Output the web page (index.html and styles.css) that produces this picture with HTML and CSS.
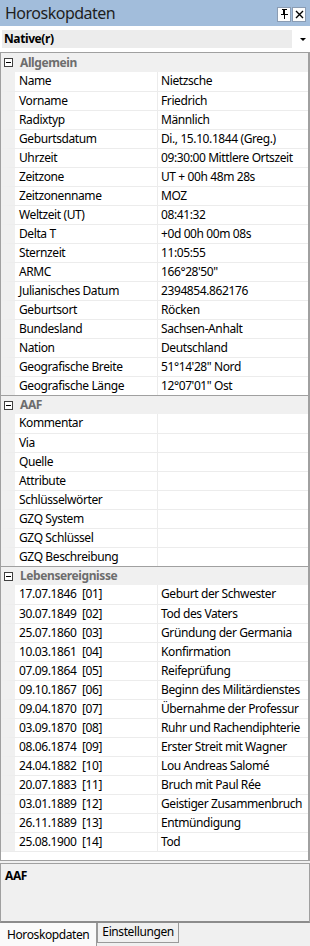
FILE: index.html
```html
<!DOCTYPE html>
<html lang="de">
<head>
    <meta charset="UTF-8">
    <title>Horoskopdaten</title>
    <link rel="stylesheet" href="styles.css">
</head>
<body>
    <div class="panel">
        <div class="titlebar">
            <span class="title">Horoskopdaten</span>
            <div class="title-buttons">
                <span class="tbtn">
                    <svg width="9" height="10" viewBox="0 0 9 10"><path d="M2 0h5v1h-1v4h2v1h-3v4h-1v-4h-3v-1h2v-4h-1z" fill="#000"/><path d="M5 1h1v4h-1z" fill="#fff"/></svg>
                </span>
                <span class="tbtn">
                    <svg width="9" height="9" viewBox="0 0 9 9"><path d="M1 1l7 7M8 1l-7 7" stroke="#000" stroke-width="1.4"/></svg>
                </span>
            </div>
        </div>

        <div class="combo-row">
            <div class="combo">Native(r)</div>
            <span class="combo-arrow"></span>
        </div>

        <div class="grid">
            <div class="cat"><span class="toggle"></span>Allgemein</div>
            <div class="row"><span class="key">Name</span><span class="val">Nietzsche</span></div>
            <div class="row"><span class="key">Vorname</span><span class="val">Friedrich</span></div>
            <div class="row"><span class="key">Radixtyp</span><span class="val">Männlich</span></div>
            <div class="row"><span class="key">Geburtsdatum</span><span class="val">Di., 15.10.1844 (Greg.)</span></div>
            <div class="row"><span class="key">Uhrzeit</span><span class="val">09:30:00 Mittlere Ortszeit</span></div>
            <div class="row"><span class="key">Zeitzone</span><span class="val">UT + 00h 48m 28s</span></div>
            <div class="row"><span class="key">Zeitzonenname</span><span class="val">MOZ</span></div>
            <div class="row"><span class="key">Weltzeit (UT)</span><span class="val">08:41:32</span></div>
            <div class="row"><span class="key">Delta T</span><span class="val">+0d 00h 00m 08s</span></div>
            <div class="row"><span class="key">Sternzeit</span><span class="val">11:05:55</span></div>
            <div class="row"><span class="key">ARMC</span><span class="val">166°28'50"</span></div>
            <div class="row"><span class="key">Julianisches Datum</span><span class="val">2394854.862176</span></div>
            <div class="row"><span class="key">Geburtsort</span><span class="val">Röcken</span></div>
            <div class="row"><span class="key">Bundesland</span><span class="val">Sachsen-Anhalt</span></div>
            <div class="row"><span class="key">Nation</span><span class="val">Deutschland</span></div>
            <div class="row"><span class="key">Geografische Breite</span><span class="val">51°14'28" Nord</span></div>
            <div class="row"><span class="key">Geografische Länge</span><span class="val">12°07'01" Ost</span></div>

            <div class="cat"><span class="toggle"></span>AAF</div>
            <div class="row"><span class="key">Kommentar</span><span class="val"></span></div>
            <div class="row"><span class="key">Via</span><span class="val"></span></div>
            <div class="row"><span class="key">Quelle</span><span class="val"></span></div>
            <div class="row"><span class="key">Attribute</span><span class="val"></span></div>
            <div class="row"><span class="key">Schlüsselwörter</span><span class="val"></span></div>
            <div class="row"><span class="key">GZQ System</span><span class="val"></span></div>
            <div class="row"><span class="key">GZQ Schlüssel</span><span class="val"></span></div>
            <div class="row"><span class="key">GZQ Beschreibung</span><span class="val"></span></div>

            <div class="cat"><span class="toggle"></span>Lebensereignisse</div>
            <div class="row"><span class="key"><span class="date">17.07.1846</span>[01]</span><span class="val">Geburt der Schwester</span></div>
            <div class="row"><span class="key"><span class="date">30.07.1849</span>[02]</span><span class="val">Tod des Vaters</span></div>
            <div class="row"><span class="key"><span class="date">25.07.1860</span>[03]</span><span class="val">Gründung der Germania</span></div>
            <div class="row"><span class="key"><span class="date">10.03.1861</span>[04]</span><span class="val">Konfirmation</span></div>
            <div class="row"><span class="key"><span class="date">07.09.1864</span>[05]</span><span class="val">Reifeprüfung</span></div>
            <div class="row"><span class="key"><span class="date">09.10.1867</span>[06]</span><span class="val">Beginn des Militärdienstes</span></div>
            <div class="row"><span class="key"><span class="date">09.04.1870</span>[07]</span><span class="val">Übernahme der Professur</span></div>
            <div class="row"><span class="key"><span class="date">03.09.1870</span>[08]</span><span class="val">Ruhr und Rachendiphterie</span></div>
            <div class="row"><span class="key"><span class="date">08.06.1874</span>[09]</span><span class="val">Erster Streit mit Wagner</span></div>
            <div class="row"><span class="key"><span class="date">24.04.1882</span>[10]</span><span class="val">Lou Andreas Salomé</span></div>
            <div class="row"><span class="key"><span class="date">20.07.1883</span>[11]</span><span class="val">Bruch mit Paul Rée</span></div>
            <div class="row"><span class="key"><span class="date">03.01.1889</span>[12]</span><span class="val">Geistiger Zusammenbruch</span></div>
            <div class="row"><span class="key"><span class="date">26.11.1889</span>[13]</span><span class="val">Entmündigung</span></div>
            <div class="row"><span class="key"><span class="date">25.08.1900</span>[14]</span><span class="val">Tod</span></div>
            <div class="grid-rest"></div>
        </div>

        <div class="desc">
            <div class="desc-title">AAF</div>
        </div>

        <div class="tabs">
            <span class="tab active">Horoskopdaten</span>
            <span class="tab">Einstellungen</span>
        </div>
    </div>
</body>
</html>
```

FILE: styles.css
```css
body {
    margin: 0;
    font-family: "Noto Sans", sans-serif;
    font-size: 12px;
    letter-spacing: -0.4px;
    color: #000;
    background: #fff;
}
.panel {
    width: 310px;
    height: 946px;
    display: flex;
    flex-direction: column;
    background: #f0f0f0;
}
.panel > * {
    flex-shrink: 0;
}
.titlebar {
    height: 26px;
    background: #a2bddb;
    display: flex;
    align-items: center;
    justify-content: space-between;
    padding: 0 4px 0 5px;
}
.title {
    font-size: 16px;
    letter-spacing: -0.5px;
    color: #1e1e1e;
}
.title-buttons {
    display: flex;
    gap: 1px;
    margin-top: 2px;
}
.tbtn {
    width: 12px;
    height: 13px;
    background: #fdfdfd;
    border: 1px solid #8a9cb3;
    display: flex;
    align-items: center;
    justify-content: center;
}
.combo-row {
    height: 26px;
    background: #fff;
    display: flex;
    align-items: center;
    padding: 0 4px 0 2px;
}
.combo {
    flex: 1;
    height: 18px;
    line-height: 18px;
    background: #ececec;
    font-weight: bold;
    padding-left: 2px;
    margin-right: 8px;
}
.combo-arrow {
    width: 0;
    height: 0;
    border-left: 3px solid transparent;
    border-right: 3px solid transparent;
    border-top: 3px solid #000;
}
.grid {
    border: 1px solid #a0a0a0;
    border-right-width: 2px;
    background: #fff;
}
.cat {
    height: 18px;
    line-height: 18px;
    border-top: 1px solid #a0a0a0;
    background: #f0f0f0;
    color: #6d6d6d;
    font-weight: bold;
    display: flex;
    align-items: center;
}
.cat:first-child {
    border-top: none;
    height: 19px;
}
.toggle {
    width: 7px;
    height: 7px;
    border: 1px solid #404040;
    background: #fff;
    margin: 0 7px 0 3px;
    position: relative;
}
.toggle::after {
    content: "";
    position: absolute;
    left: 1px;
    top: 3px;
    width: 5px;
    height: 1px;
    background: #000;
}
.row {
    height: 18px;
    line-height: 18px;
    border-top: 1px solid #ececec;
    display: flex;
    border-left: 14px solid #f0f0f0;
}
.cat + .row {
    border-top: none;
    height: 19px;
}
.key {
    width: 138px;
    padding-left: 4px;
    border-right: 1px solid #ececec;
    white-space: nowrap;
    overflow: hidden;
}
.val {
    flex: 1;
    padding-left: 3px;
    white-space: nowrap;
    overflow: hidden;
}
.date {
    display: inline-block;
    width: 63px;
}
.grid-rest {
    height: 8px;
    border-top: 1px solid #ececec;
}
.desc {
    margin-top: 2px;
    height: 51px;
    border: 1px solid #a0a0a0;
    border-bottom: 2px solid #8c8c8c;
    padding: 3px 4px;
}
.desc-title {
    font-weight: bold;
}
.tabs {
    flex: 1;
    display: flex;
    align-items: flex-start;
    background: #f0f0f0;
}
.tab {
    height: 19px;
    line-height: 18px;
    padding: 0 4px;
    border: 1px solid #9a9a9a;
    border-top: none;
    background: #f0f0f0;
}
.tab.active {
    height: 24px;
    line-height: 24px;
    border: none;
    border-right: 1px solid #9a9a9a;
    background: #fafafa;
    padding: 0 7px;
}
```
